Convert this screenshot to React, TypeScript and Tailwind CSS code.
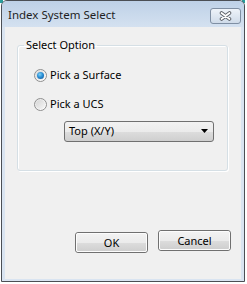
import React from 'react';

const font = { fontFamily: '"Noto Sans", "Open Sans", sans-serif' };

function Radio({ checked, label }: { checked?: boolean; label: string }) {
    return (
        <label className="flex items-center h-[16px] text-[11px] text-black">
            <span className="relative w-[13px] h-[13px] rounded-full border border-[#8f8f8f] bg-gradient-to-br from-[#e4e4e4] to-[#ffffff] flex items-center justify-center">
                <span className="w-[9px] h-[9px] rounded-full bg-gradient-to-br from-[#d6d6d6] to-[#f6f6f6] flex items-center justify-center">
                    {checked && (
                        <span className="w-[7px] h-[7px] rounded-full bg-[radial-gradient(circle_at_40%_35%,#7fd1f5_0%,#2a8fd6_45%,#0d4f8e_100%)]"></span>
                    )}
                </span>
            </span>
            <span className="ml-[3px] leading-[16px]">{label}</span>
        </label>
    );
}

function Button({ label, className = '' }: { label: string; className?: string }) {
    return (
        <button className={`w-[73px] h-[21px] rounded-[3px] border border-[#707070] p-0 text-[11px] text-black ${className}`}>
            <span className="flex h-full w-full items-center justify-center rounded-[2px] border border-[#fcfcfc] bg-[linear-gradient(to_bottom,#f2f2f2_0%,#ebebeb_50%,#dddddd_51%,#cfcfcf_100%)] leading-none">
                {label}
            </span>
        </button>
    );
}

export default function App() {
    return (
        <div className="w-[247px] h-[284px] bg-white relative" style={font}>
            <div className="absolute left-0 top-0 w-[3px] h-[3px] bg-[#2a9d9c]"></div>
            <div className="absolute right-[2px] top-0 w-[3px] h-[3px] bg-[#2a9d9c]"></div>
            <div className="relative ml-[1px] w-[244px] h-[282px] border border-[#4b4f55] rounded-t-[6px] bg-[#d9e4f1] flex flex-col overflow-hidden">
                {/* Title bar */}
                <div className="h-[26px] flex items-center justify-between pl-[6px] pr-[3px] bg-gradient-to-b from-[#bed1e7] to-[#d4e1f0] shrink-0">
                    <span className="text-[11.5px] text-[#1f1f1f] mt-[2px]">Index System Select</span>
                    <div className="mt-[4px] w-[31px] h-[16px] rounded-[3px] border border-[#7f8fa3] bg-gradient-to-b from-[#eef3f9] to-[#cfdbe9] flex items-center justify-center">
                        <svg width="13" height="10" viewBox="0 0 13 10">
                            <path d="M2.5 2 L10.5 8 M10.5 2 L2.5 8" stroke="#5a5f66" strokeWidth="3.6" strokeLinecap="round" fill="none" />
                            <path d="M2.5 2 L10.5 8 M10.5 2 L2.5 8" stroke="#ffffff" strokeWidth="1.8" strokeLinecap="round" fill="none" />
                        </svg>
                    </div>
                </div>

                {/* Client area */}
                <div className="mx-[3px] mb-[2px] flex-1 bg-[#f0f0f0] flex flex-col">
                    <fieldset className="mt-[10px] ml-[12px] w-[211px] h-[134px] border border-[#d5dfe5] rounded-[3px] shadow-[inset_1px_1px_0_#ffffff,1px_1px_0_#ffffff] px-0 pb-0">
                        <legend className="ml-[6px] px-[2px] text-[11px] leading-[16px] text-black">Select Option</legend>
                        <div className="pl-[16px] pt-[14px] flex flex-col gap-[13px]">
                            <Radio checked label="Pick a Surface" />
                            <Radio label="Pick a UCS" />
                        </div>
                        <div className="ml-[46px] mt-[9px] w-[150px] h-[21px] rounded-[3px] border border-[#707070] bg-[linear-gradient(to_bottom,#f2f2f2_0%,#ebebeb_50%,#dddddd_51%,#cfcfcf_100%)] flex items-center justify-between pl-[4px] pr-[4px] text-[11px] text-black">
                            <span>Top (X/Y)</span>
                            <svg width="8" height="5" viewBox="0 0 8 5">
                                <path d="M0 0 H7 L3.5 4 Z" fill="#000" />
                            </svg>
                        </div>
                    </fieldset>

                    <div className="mt-auto mb-[26px] flex items-start gap-[10px] pl-[70px]">
                        <Button label="OK" className="mt-[2px]" />
                        <Button label="Cancel" />
                    </div>
                </div>
            </div>
        </div>
    );
}
